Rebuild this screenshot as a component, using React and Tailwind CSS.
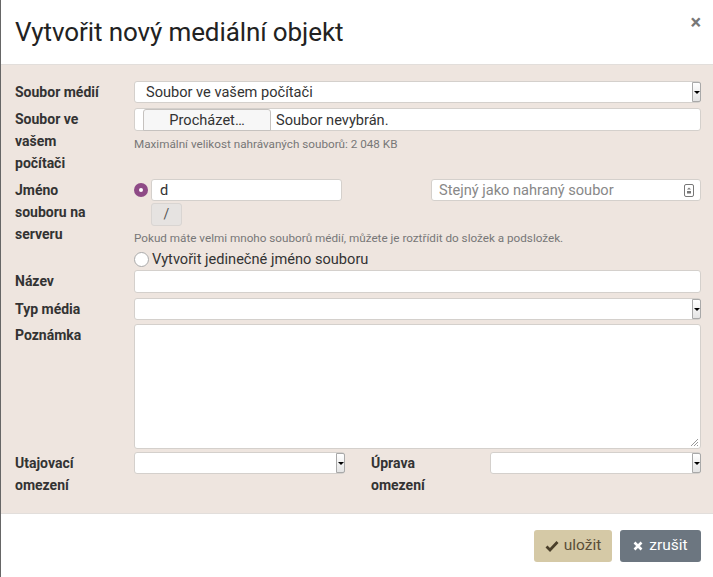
import React from 'react';

function SelectBox({ className = '', children }) {
    return (
        <div className={`h-[22px] bg-white border border-[#d4d0cc] rounded-[3px] flex items-center text-[14.6px] text-[#333] ${className}`}>
            <div className="flex-1 pl-[11px] pt-[2px] truncate">{children}</div>
            <div className="h-[20px] w-[9px] mr-[-1px] border border-[#a9a9a9] rounded-r-[2px] bg-gradient-to-b from-white to-[#e4e4e4] flex items-center justify-center">
                <div className="w-0 h-0 border-l-[3px] border-r-[3px] border-t-[3px] border-l-transparent border-r-transparent border-t-black" />
            </div>
        </div>
    );
}

function Label({ children }) {
    return <div className="w-[90px] text-[14px] leading-[22px] font-bold text-[#333]">{children}</div>;
}

export default function App() {
    return (
        <div className="w-[713px] h-[577px] bg-white border-l border-[#666] flex flex-col text-[#333]" style={{ fontFamily: 'Roboto, "Liberation Sans", sans-serif' }}>
            <div className="h-[65px] flex items-center justify-between pl-[14px] pr-[12px] border-b border-[#e2dedb]">
                <h1 className="text-[26px] leading-none font-normal text-[#222] tracking-[-0.1px]">Vytvořit nový mediální objekt</h1>
                <span className="text-[20px] font-bold text-[#777] -mt-[20px]">×</span>
            </div>

            <div className="flex-1 bg-[#eee5df] pl-[14px] pr-[12px] pt-[16px] flex flex-col gap-[5px] border-b border-[#e2dedb]">
                <div className="grid grid-cols-[119px_1fr] items-start">
                    <Label>Soubor médií</Label>
                    <SelectBox>Soubor ve vašem počítači</SelectBox>
                </div>

                <div className="grid grid-cols-[119px_1fr] items-start">
                    <Label>Soubor ve vašem počítači</Label>
                    <div>
                        <div className="h-[23px] bg-white border border-[#d4d0cc] rounded-[3px] flex items-center text-[14.6px]">
                            <div className="ml-[8px] h-[22px] mt-[1px] pt-[2px] w-[128px] bg-[#f7f7f7] border border-[#c6c2bf] rounded-t-[3px] flex items-center justify-center">Procházet…</div>
                            <span className="ml-[5px] pt-[2px]">Soubor nevybrán.</span>
                        </div>
                        <div className="text-[11.7px] leading-[14px] text-[#777] mt-[6px]">Maximální velikost nahrávaných souborů: 2 048 KB</div>
                    </div>
                </div>

                <div className="grid grid-cols-[119px_1fr] items-start">
                    <Label>Jméno souboru na serveru</Label>
                    <div className="flex flex-col">
                        <div className="flex items-start">
                            <div className="mt-[4px] w-[14px] h-[14px] rounded-full bg-[#8e4a86] flex items-center justify-center">
                                <div className="w-[4px] h-[4px] rounded-full bg-white" />
                            </div>
                            <div className="ml-[3px] w-[191px] h-[22px] bg-white border border-[#d4d0cc] rounded-[3px] flex items-center pl-[8px] pt-[2px] text-[14.6px]">d</div>
                            <div className="ml-[89px] flex-1 h-[22px] bg-white border border-[#d4d0cc] rounded-[3px] flex items-center pl-[7px] pr-[6px] text-[14.6px] text-[#888]">
                                <span className="flex-1 pt-[2px]">Stejný jako nahraný soubor</span>
                                <svg width="10" height="13" viewBox="0 0 10 13" fill="none">
                                    <rect x="0.5" y="0.5" width="9" height="12" rx="1.5" stroke="#777" />
                                    <path d="M3 5.5 L5 3.5 L7 5.5 Z" fill="#777" />
                                    <rect x="3" y="7" width="4" height="2.5" fill="#777" />
                                </svg>
                            </div>
                        </div>
                        <div className="ml-[17px] mt-[2px] w-[31px] h-[23px] bg-[#e6e3e1] border border-[#d9d5d2] rounded-[3px] flex items-center justify-center text-[14px] text-[#555]">/</div>
                        <div className="text-[11.7px] leading-[14px] text-[#777] mt-[5px]">Pokud máte velmi mnoho souborů médií, můžete je roztřídit do složek a podsložek.</div>
                        <div className="flex items-center mt-[5px] text-[14.6px] leading-[18px]">
                            <div className="w-[15px] h-[15px] rounded-full bg-white border border-[#aaa]" />
                            <span className="ml-[3px]">Vytvořit jedinečné jméno souboru</span>
                        </div>
                    </div>
                </div>

                <div className="grid grid-cols-[119px_1fr] items-start -mt-[3px]">
                    <Label>Název</Label>
                    <div className="h-[23px] bg-white border border-[#d4d0cc] rounded-[3px]" />
                </div>

                <div className="grid grid-cols-[119px_1fr] items-start">
                    <Label>Typ média</Label>
                    <SelectBox />
                </div>

                <div className="grid grid-cols-[119px_1fr] items-start -mt-[1px]">
                    <Label>Poznámka</Label>
                    <div className="h-[125px] bg-white border border-[#d4d0cc] rounded-[3px] relative">
                        <svg className="absolute right-[1px] bottom-[1px]" width="9" height="9" viewBox="0 0 9 9">
                            <path d="M8 1 L1 8 M8 4 L4 8 M8 7 L7 8" stroke="#999" strokeWidth="1" />
                        </svg>
                    </div>
                </div>

                <div className="grid grid-cols-[119px_211px_26px_119px_1fr] items-start -mt-[2px]">
                    <Label>Utajovací omezení</Label>
                    <SelectBox />
                    <div />
                    <Label>Úprava omezení</Label>
                    <SelectBox />
                </div>
            </div>

            <div className="h-[63px] flex items-start justify-end gap-[8px] pt-[16px] pr-[12px]">
                <button className="h-[32px] w-[78px] rounded-[3px] bg-[#d5c9a6] text-[#5a4f38] text-[15.5px] flex items-center justify-center gap-[5px]">
                    <svg width="14" height="12" viewBox="0 0 14 12">
                        <path d="M1.5 6.5 L5 10 L12.5 2" stroke="#4a3f2a" strokeWidth="2.8" fill="none" />
                    </svg>
                    uložit
                </button>
                <button className="h-[32px] w-[81px] rounded-[3px] bg-[#6c7680] text-white text-[15.5px] flex items-center justify-center gap-[6px]">
                    <svg width="10" height="10" viewBox="0 0 10 10">
                        <path d="M1.5 1.5 L8.5 8.5 M8.5 1.5 L1.5 8.5" stroke="white" strokeWidth="2.6" />
                    </svg>
                    zrušit
                </button>
            </div>
        </div>
    );
}
